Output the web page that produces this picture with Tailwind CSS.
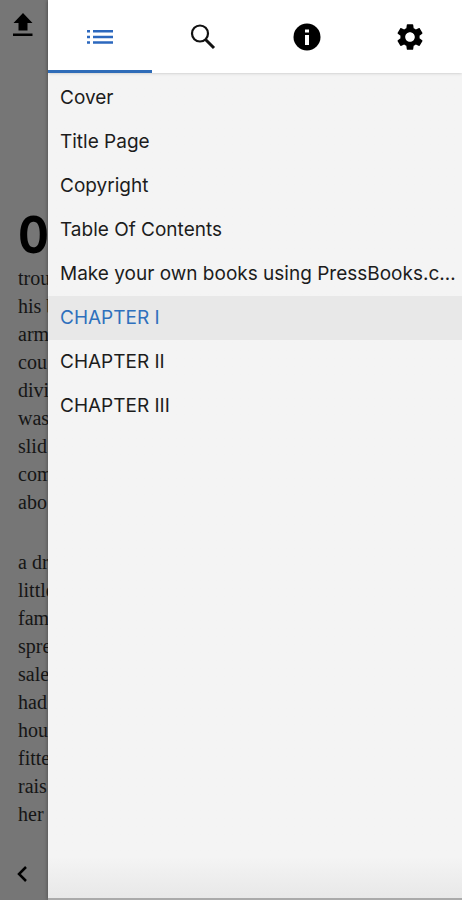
<!doctype html>
<html lang="en">
    <head>
        <meta charset="UTF-8" />
        <meta name="viewport" content="width=device-width, initial-scale=1.0" />
        <title>Book Reader</title>
        <script src="https://cdn.jsdelivr.net/npm/@tailwindcss/browser@4"></script>
    </head>
    <body
        class="flex h-screen overflow-hidden bg-[#767676] font-['Inter',sans-serif] text-[#1c1c1c]"
    >
        <!-- Dimmed book page behind the drawer -->
        <main class="flex w-12 shrink-0 flex-col overflow-hidden">
            <button type="button" aria-label="Library" class="pt-3 pl-3">
                <svg class="h-6 w-[22px]" viewBox="0 0 22 24" fill="#000">
                    <path d="M11 1 20.500 11H15.500V18.500H6.500V11H1.500Z" />
                    <path d="M1 21.500H20.500V24H1Z" />
                </svg>
            </button>
            <article
                class="grow pt-[162px] pl-[18px] font-['Liberation_Serif',serif] text-xl leading-7 whitespace-nowrap text-[#151515]"
            >
                <p
                    class="h-[66px] font-['Noto_Sans_ExtraCondensed','Open_Sans_Condensed','Noto_Sans_Condensed','Liberation_Mono',monospace] text-[52px] leading-[70px] font-bold text-black"
                >
                    O
                </p>
                <p>
                    trou<br />his b<br />arm<br />cou<br />divi<br />was<br />slid<br />com<br />abo
                </p>
                <p class="pt-8">
                    a dr<br />little<br />fam<br />spre<br />sale<br />had<br />hou<br />fitte<br />rais<br />her
                </p>
            </article>
            <button type="button" aria-label="Previous page" class="pb-4 pl-4">
                <svg
                    class="h-5 w-3"
                    viewBox="0 0 12 20"
                    fill="none"
                    stroke="#000"
                    stroke-width="2.5"
                >
                    <path d="M10 3 3 10l7 7" />
                </svg>
            </button>
        </main>

        <!-- Drawer -->
        <aside
            class="flex min-w-0 grow flex-col border-b-2 border-[#aaa] bg-[#f4f4f4] shadow-[0_0_4px_#0006]"
        >
            <nav class="z-10 grid h-[73px] shrink-0 grid-cols-4 bg-white shadow">
                <button
                    type="button"
                    aria-label="Contents"
                    class="flex items-center justify-center border-b-3 border-[#2f6cb8] pt-1"
                >
                    <svg class="h-4 w-[26px]" viewBox="0 0 26 16" fill="#2c68be">
                        <path
                            d="M0 1h3v2.500H0zM6 1h20v2.500H6zM0 6.750h3v2.500H0zM6 6.750h20v2.500H6zM0 12.250h3v2.500H0zM6 12.250h20v2.500H6z"
                        />
                    </svg>
                </button>
                <button
                    type="button"
                    aria-label="Search"
                    class="flex items-center justify-center pt-px"
                >
                    <svg
                        class="size-7"
                        viewBox="0 0 28 28"
                        fill="none"
                        stroke="#111"
                    >
                        <circle cx="11" cy="10.500" r="8" stroke-width="2.2" />
                        <path d="m16.500 16.500 8.500 8.500" stroke-width="3" />
                    </svg>
                </button>
                <button
                    type="button"
                    aria-label="Information"
                    class="flex items-center justify-center pt-px"
                >
                    <svg class="size-7" viewBox="0 0 28 28" fill="#fff">
                        <circle cx="14" cy="14" r="13.500" fill="#000" />
                        <path d="M12 6.500h4v3h-4zM12 12h4v10h-4z" />
                    </svg>
                </button>
                <button
                    type="button"
                    aria-label="Settings"
                    class="flex items-center justify-center pt-px"
                >
                    <svg class="size-8" viewBox="0 0 24 24" fill="#000">
                        <path
                            d="M19.14 12.940c.040-.300.060-.610.060-.940 0-.320-.020-.640-.070-.940l2.030-1.580c.180-.140.230-.410.120-.610l-1.920-3.320c-.120-.220-.370-.290-.590-.220l-2.390.960c-.500-.380-1.030-.700-1.620-.940L14.400 2.810c-.040-.240-.240-.410-.480-.410h-3.840c-.240 0-.430.170-.470.410L9.250 5.350C8.660 5.590 8.120 5.920 7.630 6.290L5.240 5.330c-.220-.080-.470 0-.590.220L2.740 8.870c-.120.210-.080.470.120.610l2.030 1.580c-.050.300-.090.630-.090.940s.020.640.070.940l-2.030 1.580c-.180.140-.230.410-.120.610l1.920 3.320c.120.220.370.290.590.220l2.390-.960c.500.380 1.030.700 1.620.940l.360 2.540c.050.240.240.410.480.410h3.840c.240 0 .440-.170.470-.410l.360-2.540c.590-.240 1.130-.560 1.620-.940l2.390.960c.220.080.470 0 .590-.220l1.920-3.320c.120-.220.070-.470-.120-.610zM12 15.600c-1.980 0-3.600-1.620-3.600-3.600s1.620-3.600 3.600-3.600 3.600 1.620 3.600 3.600-1.620 3.600-3.600 3.600z"
                        />
                    </svg>
                </button>
            </nav>

            <div
                class="flex grow flex-col bg-linear-to-b from-[#f4f4f4] from-95% to-[#e8e8e8] pt-[3px] text-[19px] leading-[44px]"
            >
                <a href="#cover" class="truncate pr-1 pl-3">Cover</a>
                <a href="#title-page" class="truncate pr-1 pl-3">Title Page</a>
                <a href="#copyright" class="truncate pr-1 pl-3">Copyright</a>
                <a href="#contents" class="truncate pr-1 pl-3"
                    >Table Of Contents</a
                >
                <a href="#pressbooks" class="truncate pr-1 pl-3"
                    >Make your own books using PressBooks.com</a
                >
                <a
                    href="#chapter-1"
                    aria-current="page"
                    class="truncate bg-[#e8e8e8] pr-1 pl-3 text-[#2f70bd]"
                    >CHAPTER I</a
                >
                <a href="#chapter-2" class="truncate pr-1 pl-3">CHAPTER II</a>
                <a href="#chapter-3" class="truncate pr-1 pl-3">CHAPTER III</a>
            </div>
        </aside>
    </body>
</html>
